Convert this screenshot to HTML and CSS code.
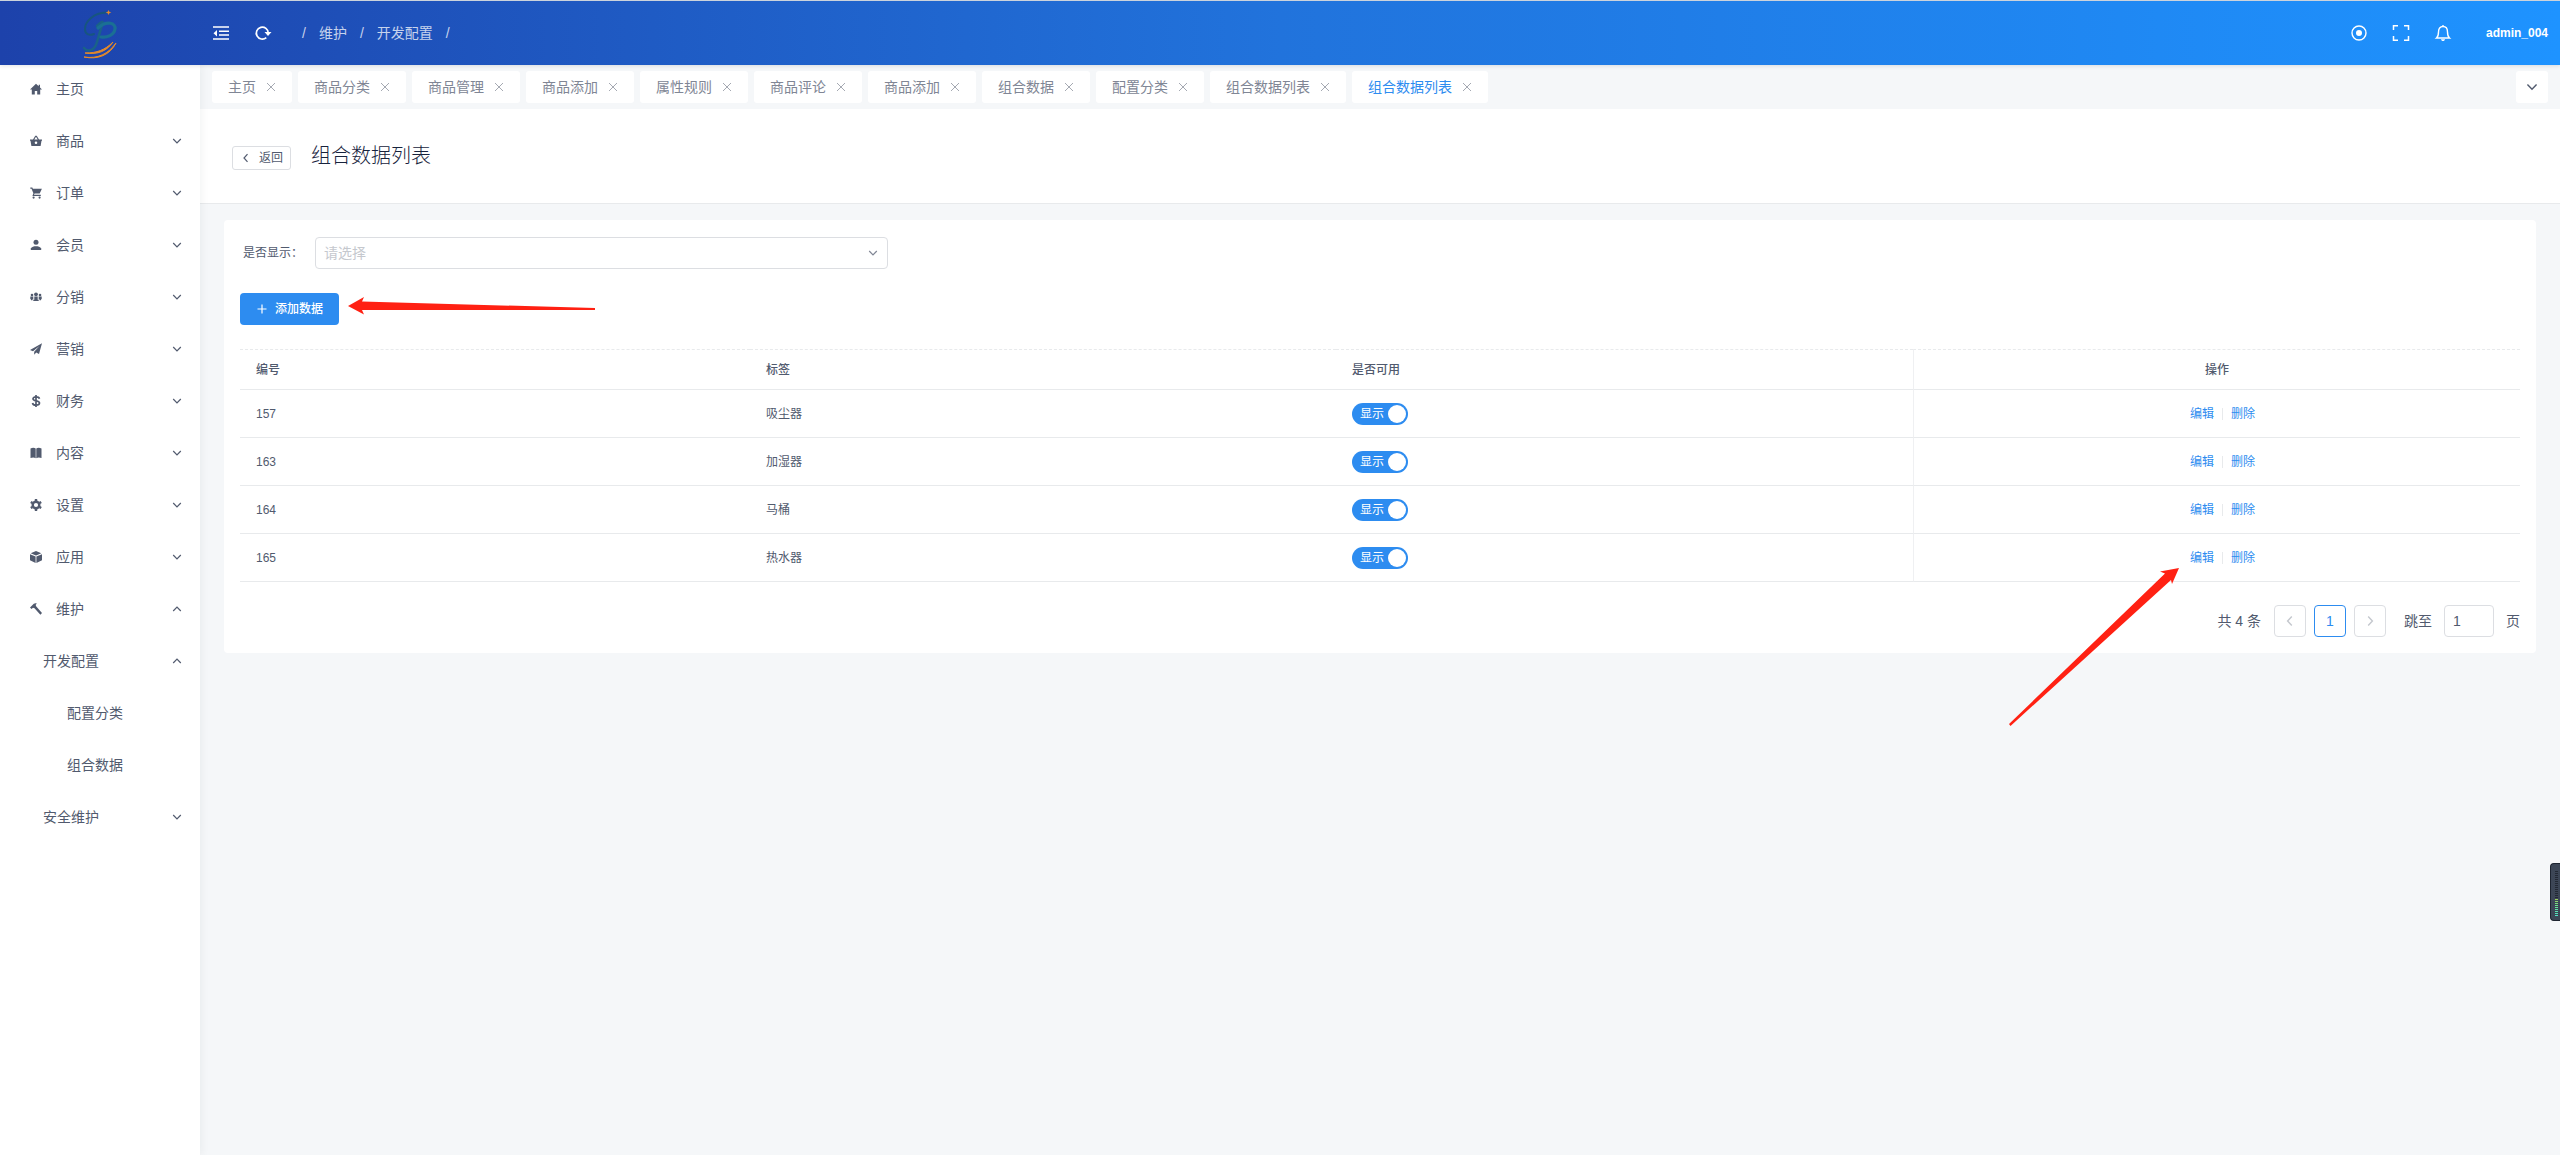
FILE: index.html
```html
<!DOCTYPE html>
<html lang="zh-CN">
<head>
<meta charset="utf-8">
<title>组合数据列表</title>
<link rel="stylesheet" href="styles.css">
</head>
<body>
<svg class="defs" aria-hidden="true">
  <symbol id="down" viewBox="0 0 10 10"><path d="M1.2 3l3.8 3.8L8.800 3" fill="none" stroke="currentColor" stroke-width="1.2"/></symbol>
  <symbol id="up" viewBox="0 0 10 10"><path d="M1.200 7l3.800-3.800L8.800 7" fill="none" stroke="currentColor" stroke-width="1.2"/></symbol>
  <symbol id="left" viewBox="0 0 10 10"><path d="M6.500 1.200L3 5l3.500 3.800" fill="none" stroke="currentColor" stroke-width="1.2"/></symbol>
  <symbol id="right" viewBox="0 0 10 10"><path d="M3.500 1.200L7 5 3.500 8.800" fill="none" stroke="currentColor" stroke-width="1.2"/></symbol>
  <symbol id="x" viewBox="0 0 10 10"><path d="M1 1l8 8M9 1L1 9" fill="none" stroke="currentColor"/></symbol>
</svg>
<header class="topbar">
  <a class="logo" href="#" aria-label="首页">
    <svg width="38" height="52" viewBox="0 0 38 52">
      <g fill="none" stroke-linecap="round">
        <path d="M25 5.500C13 6 4 14 4 22c0 5 4 7 9 5" stroke="#17557f" stroke-width="2"/>
        <path d="M16 19c4-4 7-6 5-1l-5 17c-2 8-9 11-13 6" stroke="#1a6288" stroke-width="2.600"/>
        <path d="M17 21c9-8 18-5 17 1-1 6-8 9-14 8" stroke="#1a6f94" stroke-width="3.200"/>
      </g>
      <path d="M27.500 3l.8 1.700 2 .8-2 .8-.8 1.700-.8-1.700-2-.8 2-.8z" fill="#e58a2a"/>
      <path d="M4 46c12 0 20-3 28-11-6 9-15 13-28 11z" fill="#e58a2a" stroke="#e58a2a"/>
      <path d="M3 50c14 2 24-3 32-14-6 12-18 17-32 14z" fill="#e58a2a" stroke="#e58a2a"/>
    </svg>
  </a>
  <button class="icon-btn" type="button" aria-label="收起菜单">
    <svg width="18" height="18" viewBox="0 0 18 18"><path d="M1 3h16M7 7.300h10M7 11h10M1 15h16" fill="none" stroke="currentColor" stroke-width="1.600"/><path d="M1.500 9.200L5 6v6.400z" fill="currentColor"/></svg>
  </button>
  <button class="icon-btn" type="button" aria-label="刷新">
    <svg width="18" height="18" viewBox="0 0 18 18"><path d="M12.300 13.600A6 6 0 1 1 14.300 9" fill="none" stroke="currentColor" stroke-width="1.700"/><path d="M10.500 8h7l-3.500 4z" fill="currentColor"/></svg>
  </button>
  <nav class="crumbs"><span>/</span><a href="#">维护</a><span>/</span><a href="#">开发配置</a><span>/</span></nav>
  <div class="tools">
    <button class="icon-btn" type="button" aria-label="搜索"><svg width="18" height="18" viewBox="0 0 18 18"><circle cx="9" cy="9" r="7" fill="none" stroke="currentColor" stroke-width="1.400"/><circle cx="9" cy="9" r="3" fill="currentColor"/></svg></button>
    <button class="icon-btn" type="button" aria-label="全屏"><svg width="18" height="18" viewBox="0 0 18 18"><path d="M1.500 6V1.700H6M12 1.700h4.500V6M16.500 12v4.300H12M6 16.300H1.500V12" fill="none" stroke="currentColor" stroke-width="1.500"/></svg></button>
    <button class="icon-btn" type="button" aria-label="通知"><svg width="18" height="18" viewBox="0 0 18 18"><path d="M2.500 14h13c-1.800-1.500-2-3-2-6 0-3.500-1.500-5.500-4.500-5.500S4.500 4.500 4.500 8c0 3-.2 4.500-2 6zM9 1v1.500" fill="none" stroke="currentColor" stroke-width="1.400"/><path d="M7 15.300h4c-.3 2.400-3.700 2.400-4 0z" fill="currentColor"/></svg></button>
    <a class="user" href="#">admin_004</a>
  </div>
</header>
<div class="shell">
  <nav class="sidebar">
    <a class="item" href="#"><svg class="ico" viewBox="0 0 12 12"><path d="M6 .8L0 6.500h1.800V11.500H4.800V8h2.400v3.500h3V6.500H12L10 4.600V1.800H8.700v1.500z"/></svg>主页</a>
    <a class="item" href="#"><svg class="ico" viewBox="0 0 12 12"><path d="M3 4.500L5.300.8h1.400L9 4.500h3v1.300h-.5L10.600 11H1.400L.5 5.800H0V4.500zm1.300 0h3.400L6 1.800zM6 6.500a1.300 1.300 0 1 0 0 2.600 1.300 1.300 0 0 0 0-2.600z" fill-rule="evenodd"/></svg>商品<svg class="chev"><use href="#down"/></svg></a>
    <a class="item" href="#"><svg class="ico" viewBox="0 0 12 12"><path d="M.3.500h2l.6 1.300h9L9.700 6.500H4.600L4 7.700h6.800v1.200H2.400l1-2.600L1.500 1.700H.3z"/><circle cx="3.600" cy="10.600" r="1.100"/><circle cx="9.600" cy="10.600" r="1.100"/></svg>订单<svg class="chev"><use href="#down"/></svg></a>
    <a class="item" href="#"><svg class="ico" viewBox="0 0 12 12"><circle cx="6" cy="3.300" r="2.500"/><path d="M.8 11V9.600C1.500 7.500 4 7.200 6 7.200s4.500.3 5.200 2.400V11z"/></svg>会员<svg class="chev"><use href="#down"/></svg></a>
    <a class="item" href="#"><svg class="ico" viewBox="0 0 12 12"><circle cx="6" cy="3.300" r="1.900"/><circle cx="2" cy="4" r="1.300"/><circle cx="10" cy="4" r="1.300"/><path d="M4.300 5.600h3.400v3.200h1v1.300H3.300V8.800h1zM.3 5.600h3v2.700h-.8v1H1v-1H.3zM8.700 5.600h3v2.700H11v1H9.500v-1h-.8z"/></svg>分销<svg class="chev"><use href="#down"/></svg></a>
    <a class="item" href="#"><svg class="ico" viewBox="0 0 12 12"><path d="M12 .3L0 7l3 1.200L9.500 3 4.200 8.700v3l2-2.100 2.800 1.500z"/></svg>营销<svg class="chev"><use href="#down"/></svg></a>
    <a class="item" href="#"><svg class="ico" viewBox="0 0 12 12"><path d="M9.500 3.700C9 2.300 7.800 1.900 6 1.900c-1.800 0-3 .6-3 1.900 0 3 6.500 1 6.500 4.300C9.500 9.500 8 10.200 6 10.200c-2 0-3.200-.7-3.500-2.200M6 0v12" fill="none" stroke="currentColor" stroke-width="1.700"/></svg>财务<svg class="chev"><use href="#down"/></svg></a>
    <a class="item" href="#"><svg class="ico" viewBox="0 0 12 12"><path d="M.5 1.500C2.500.5 4.500.6 5.700 1.600v9.600C4.300 10.200 2.500 10.200.5 11zM6.300 1.600C7.500.6 9.500.5 11.500 1.500V11c-2-.8-3.800-.8-5.200.2z"/></svg>内容<svg class="chev"><use href="#down"/></svg></a>
    <a class="item" href="#"><svg class="ico" viewBox="0 0 12 12"><circle cx="6" cy="6" r="3.300" fill="none" stroke="currentColor" stroke-width="2.400"/><path d="M6 0v2M6 10v2M.8 3l1.700 1M9.500 8l1.700 1M.8 9l1.700-1M9.500 4l1.700-1" stroke="currentColor" stroke-width="2.400"/></svg>设置<svg class="chev"><use href="#down"/></svg></a>
    <a class="item" href="#"><svg class="ico" viewBox="0 0 12 12"><path d="M6 0l5.300 2.300L6 4.600.7 2.300zM0 3.200l5.600 2.400v6.300L0 9.300zM12 3.200L6.400 5.600v6.300L12 9.300z"/></svg>应用<svg class="chev"><use href="#down"/></svg></a>
    <a class="item" href="#"><svg class="ico" viewBox="0 0 12 12"><path d="M0 4.500L3.800.8c1-.8 2-.8 3-.3L5.600 2l.7 1.500 5.700 6.600-1.600 1.600L4.500 5.300 3 4.800 1.500 6z"/></svg>维护<svg class="chev"><use href="#up"/></svg></a>
    <a class="item sub" href="#">开发配置<svg class="chev"><use href="#up"/></svg></a>
    <a class="item leaf" href="#">配置分类</a>
    <a class="item leaf" href="#">组合数据</a>
    <a class="item sub" href="#">安全维护<svg class="chev"><use href="#down"/></svg></a>
  </nav>
  <main class="main">
    <div class="tabs">
      <a class="tab" href="#">主页<svg><use href="#x"/></svg></a>
      <a class="tab" href="#">商品分类<svg><use href="#x"/></svg></a>
      <a class="tab" href="#">商品管理<svg><use href="#x"/></svg></a>
      <a class="tab" href="#">商品添加<svg><use href="#x"/></svg></a>
      <a class="tab" href="#">属性规则<svg><use href="#x"/></svg></a>
      <a class="tab" href="#">商品评论<svg><use href="#x"/></svg></a>
      <a class="tab" href="#">商品添加<svg><use href="#x"/></svg></a>
      <a class="tab" href="#">组合数据<svg><use href="#x"/></svg></a>
      <a class="tab" href="#">配置分类<svg><use href="#x"/></svg></a>
      <a class="tab" href="#">组合数据列表<svg><use href="#x"/></svg></a>
      <a class="tab active" href="#">组合数据列表<svg><use href="#x"/></svg></a>
      <button class="more" type="button" aria-label="更多标签"><svg><use href="#down"/></svg></button>
    </div>
    <div class="page-head">
      <button class="back" type="button"><svg><use href="#left"/></svg>返回</button>
      <h1>组合数据列表</h1>
    </div>
    <section class="card">
      <form class="filter">
        <label for="show">是否显示：</label>
        <div class="select">
          <select id="show"><option>请选择</option><option>显示</option><option>不显示</option></select>
          <svg><use href="#down"/></svg>
        </div>
      </form>
      <div class="add-row">
        <button class="add" type="button"><svg viewBox="0 0 10 10"><path d="M5 .5v9M.5 5h9" stroke="currentColor" stroke-width="1.200"/></svg>添加数据</button>
        <svg class="arrow-add" width="248" height="18" viewBox="0 0 248 18"><path d="M0 9L16 0l-2 4.500L247 11v2L14 13l2 4.500z"/></svg>
      </div>
      <table>
        <colgroup><col class="c-id"><col class="c-label"><col class="c-state"><col></colgroup>
        <thead><tr><th>编号</th><th>标签</th><th>是否可用</th><th class="ops">操作</th></tr></thead>
        <tbody>
          <tr><td>157</td><td>吸尘器</td><td><label class="switch"><span>显示</span><input type="checkbox" checked></label></td><td class="ops"><span class="links"><a href="#">编辑</a><i></i><a href="#">删除</a></span></td></tr>
          <tr><td>163</td><td>加湿器</td><td><label class="switch"><span>显示</span><input type="checkbox" checked></label></td><td class="ops"><span class="links"><a href="#">编辑</a><i></i><a href="#">删除</a></span></td></tr>
          <tr><td>164</td><td>马桶</td><td><label class="switch"><span>显示</span><input type="checkbox" checked></label></td><td class="ops"><span class="links"><a href="#">编辑</a><i></i><a href="#">删除</a></span></td></tr>
          <tr><td>165</td><td>热水器</td><td><label class="switch"><span>显示</span><input type="checkbox" checked></label></td><td class="ops"><span class="links"><a href="#">编辑</a><i></i><a href="#">删除</a><svg class="arrow-edit" width="171" height="160" viewBox="0 0 171 160"><path d="M170 1l-19 3.500 5 2L0 157l1.500 2L162 13l1 4z"/></svg></span></td></tr>
        </tbody>
      </table>
      <div class="pager">
        <span class="total">共 4 条</span>
        <button type="button" disabled aria-label="上一页"><svg><use href="#left"/></svg></button>
        <button type="button" class="current">1</button>
        <button type="button" disabled aria-label="下一页"><svg><use href="#right"/></svg></button>
        <label class="jump">跳至<input type="text" value="1">页</label>
      </div>
    </section>
  </main>
</div>
<div class="meter"><span></span></div>
</body>
</html>
```
FILE: styles.css
```css
* { box-sizing: border-box; }
body {
  margin: 0;
  min-height: 100vh;
  display: flex;
  flex-direction: column;
  border-top: 1px solid #ccd3dc;
  background: #f5f7f9;
  color: #515a6e;
  font: 14px/20px "Liberation Sans", "Noto Sans CJK SC", sans-serif;
}
a { color: inherit; text-decoration: none; }
button, input, select { font: inherit; color: inherit; margin: 0; }
button { cursor: pointer; padding: 0; }
svg { display: block; flex: none; }
.defs { position: absolute; width: 0; height: 0; }

.topbar {
  position: relative;
  z-index: 2;
  display: flex;
  align-items: center;
  height: 64px;
  padding-right: 12px;
  background: linear-gradient(90deg, #1d42ab, #2173dc, #1e93ff);
  box-shadow: 0 1px 4px rgba(0, 21, 41, .12);
  color: #fff;
}
.logo { display: flex; justify-content: center; width: 200px; }
.icon-btn {
  display: flex;
  justify-content: center;
  width: 42px;
  border: 0;
  background: none;
}
.crumbs { display: flex; gap: 13px; margin-left: 18px; color: rgba(255, 255, 255, .75); }
.tools { display: flex; align-items: center; margin-left: auto; }
.user { margin-left: 22px; font-size: 12px; font-weight: bold; }

.shell { display: flex; flex: 1; }
.sidebar {
  display: flex;
  flex: none;
  flex-direction: column;
  gap: 4px;
  width: 200px;
  background: #fff;
  box-shadow: 2px 0 8px rgba(29, 35, 41, .05);
  z-index: 1;
}
.item { display: flex; align-items: center; height: 48px; padding: 0 18px 0 30px; }
.ico { width: 12px; height: 12px; margin-right: 14px; fill: currentColor; }
.chev { width: 10px; height: 10px; margin-left: auto; }
.sub { padding-left: 43px; }
.leaf { padding-left: 67px; }

.main { flex: 1; min-width: 0; }
.tabs { display: flex; gap: 6px; padding: 6px 12px; }
.tab {
  display: flex;
  align-items: center;
  gap: 10px;
  height: 32px;
  padding: 0 16px;
  border-radius: 3px;
  background: #fff;
  color: #808695;
}
.tab svg { width: 10px; height: 10px; color: #a5a9b2; }
.tab.active { color: #2d8cf0; }
.more {
  display: flex;
  align-items: center;
  justify-content: center;
  width: 32px;
  height: 32px;
  margin-left: auto;
  border: 0;
  border-radius: 3px;
  background: #fff;
}
.more svg { width: 12px; height: 12px; }

.page-head {
  display: flex;
  align-items: center;
  gap: 20px;
  height: 95px;
  padding: 0 32px;
  border-bottom: 1px solid #e8eaec;
  background: #fff;
}
.back {
  display: flex;
  align-items: center;
  gap: 8px;
  height: 24px;
  margin-top: 3px;
  padding: 0 7px 0 8px;
  border: 1px solid #dcdee2;
  border-radius: 3px;
  background: #fff;
  font-size: 12px;
}
.back svg { width: 10px; height: 10px; }
h1 { margin: 0; color: #17233d; font-size: 20px; font-weight: 300; line-height: 28px; }

.card { margin: 16px 24px; padding: 17px 16px 16px; border-radius: 4px; background: #fff; }
.filter { display: flex; align-items: center; width: 28.4%; font-size: 12px; }
.filter label { flex: none; width: 75px; padding-left: 3px; }
.select { display: flex; flex: 1; align-items: center; position: relative; }
.select select {
  width: 100%;
  height: 32px;
  padding: 0 8px;
  border: 1px solid #dcdee2;
  border-radius: 4px;
  appearance: none;
  background: #fff;
  color: #c5c8ce;
  font-size: 14px;
}
.select svg { position: absolute; right: 10px; width: 10px; height: 10px; color: #808695; }

.add-row { display: flex; position: relative; margin: 24px 0; width: max-content; }
.add {
  display: flex;
  align-items: center;
  gap: 8px;
  height: 32px;
  padding: 0 16px 0 17px;
  border: 0;
  border-radius: 4px;
  background: #2d8cf0;
  color: #fff;
  font-size: 12px;
  font-weight: 500;
}
.add svg { width: 10px; height: 10px; }
.arrow-add, .arrow-edit { position: absolute; fill: #ff2113; pointer-events: none; }
.arrow-add { left: calc(100% + 9px); top: 4px; }

table { width: 100%; border-collapse: separate; border-spacing: 0; table-layout: fixed; font-size: 12px; }
.c-id { width: 22.37%; }
.c-label { width: 25.7%; }
.c-state { width: 25.3%; }
th, td { height: 48px; padding: 0 16px; border-bottom: 1px solid #e8eaec; text-align: left; }
th { height: 41px; border-top: 1px dashed #e8eaec; font-weight: 500; }
.ops { border-left: 1px solid #eff0f2; text-align: center; }
.switch {
  display: flex;
  align-items: center;
  justify-content: space-between;
  width: 56px;
  height: 22px;
  padding: 0 2px 0 8px;
  border-radius: 11px;
  background: #2d8cf0;
  color: #fff;
}
.switch input { width: 18px; height: 18px; border-radius: 50%; appearance: none; background: #fff; }
.links { display: inline-flex; position: relative; align-items: center; gap: 8px; margin-left: 11px; color: #2d8cf0; }
.links i { width: 1px; height: 12px; background: #e8eaec; }
.arrow-edit { right: calc(100% + 10px); top: 19px; }

.pager { display: flex; align-items: center; justify-content: flex-end; gap: 8px; margin-top: 23px; }
.total { margin-right: 5px; }
.pager button {
  display: flex;
  align-items: center;
  justify-content: center;
  width: 32px;
  height: 32px;
  border: 1px solid #dcdee2;
  border-radius: 4px;
  background: #fff;
}
.pager button:disabled { color: #c5c8ce; }
.pager .current { border-color: #2d8cf0; color: #2d8cf0; }
.pager svg { width: 12px; height: 12px; }
.jump { display: flex; align-items: center; gap: 12px; margin-left: 10px; }
.jump input { width: 50px; height: 32px; padding: 0 8px; border: 1px solid #dcdee2; border-radius: 4px; background: #fff; }

.meter {
  position: fixed;
  right: 0;
  top: 863px;
  z-index: 3;
  width: 10px;
  height: 58px;
  padding: 7px 2px 5px 4px;
  border: 1px solid #1d2430;
  border-right: 0;
  border-radius: 4px 0 0 4px;
  background: #3c4656;
}
.meter span {
  display: block;
  height: 45px;
  background:
    repeating-linear-gradient(transparent 0 1px, #3c4656 1px 2px),
    linear-gradient(#222833 0 28px, #a0d05a 28px, #6be48c 34px, #4fe0c8);
}
```
